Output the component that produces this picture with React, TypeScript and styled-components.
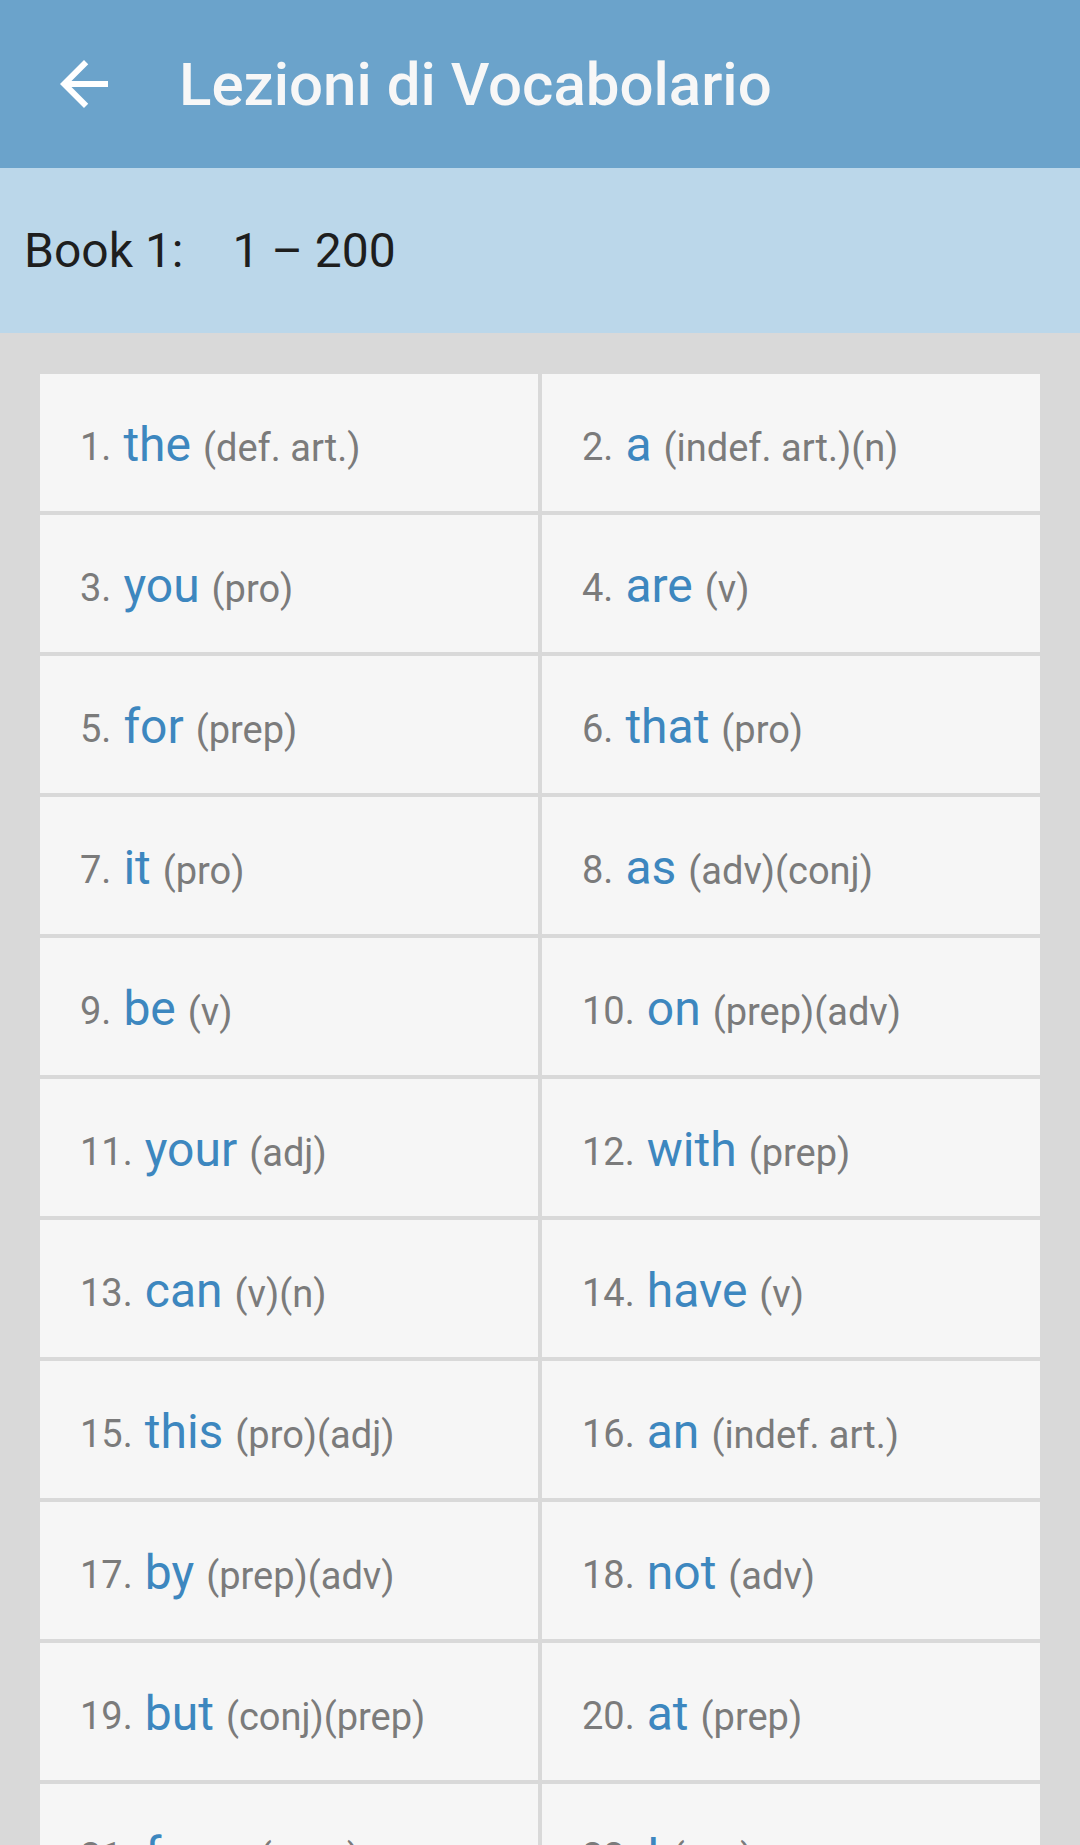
import React from "react";
import styled, { createGlobalStyle } from "styled-components";

const GlobalStyle = createGlobalStyle`
    html, body {
        margin: 0;
        padding: 0;
        background: #d9d9d9;
    }
    body {
        font-family: Roboto, "Noto Sans", "Liberation Sans", sans-serif;
        -webkit-font-smoothing: antialiased;
    }
`;

const Screen = styled.div`
    width: 1080px;
    min-height: 1845px;
    background: #d9d9d9;
`;

const AppBar = styled.header`
    display: flex;
    align-items: center;
    height: 168px;
    padding-left: 48px;
    background: #6ba3cb;
    box-sizing: border-box;
`;

const BackButton = styled.button`
    display: flex;
    align-items: center;
    justify-content: center;
    width: 72px;
    height: 72px;
    padding: 0;
    border: none;
    background: transparent;
    color: #ffffff;
    cursor: pointer;
`;

const Title = styled.h1`
    margin: 0 0 0 59px;
    font-size: 60px;
    font-weight: 500;
    color: #f7f7f7;
    letter-spacing: 0;
`;

const SubHeader = styled.div`
    display: flex;
    align-items: center;
    height: 165px;
    padding-left: 24px;
    background: #bbd7ea;
    font-size: 48px;
    color: #1e1e1e;
`;

const RangeLabel = styled.span`
    margin-left: 49px;
`;

const WordGrid = styled.div`
    display: grid;
    grid-template-columns: 1fr 1fr;
    gap: 4px;
    margin: 41px 40px 0;
`;

const Cell = styled.div`
    height: 137px;
    padding: 47px 0 0 40px;
    background: #f6f6f6;
    box-sizing: border-box;
    white-space: nowrap;
    line-height: 1;
`;

const Num = styled.span`
    font-size: 38px;
    color: #7b7b7b;
    margin-right: 12px;
    position: relative;
    top: -1px;
`;

const Word = styled.span`
    font-size: 48px;
    color: #3d87bf;
`;

const Pos = styled.span`
    font-size: 38px;
    color: #7b7b7b;
    margin-left: 12px;
`;

const ArrowBack = () => (
    <svg width="72" height="72" viewBox="0 0 24 24" fill="currentColor">
        <path d="M20 11H7.83l5.59-5.59L12 4l-8 8 8 8 1.41-1.41L7.83 13H20v-2z" />
    </svg>
);

const words: [string, string][] = [
    ["the", "(def. art.)"],
    ["a", "(indef. art.)(n)"],
    ["you", "(pro)"],
    ["are", "(v)"],
    ["for", "(prep)"],
    ["that", "(pro)"],
    ["it", "(pro)"],
    ["as", "(adv)(conj)"],
    ["be", "(v)"],
    ["on", "(prep)(adv)"],
    ["your", "(adj)"],
    ["with", "(prep)"],
    ["can", "(v)(n)"],
    ["have", "(v)"],
    ["this", "(pro)(adj)"],
    ["an", "(indef. art.)"],
    ["by", "(prep)(adv)"],
    ["not", "(adv)"],
    ["but", "(conj)(prep)"],
    ["at", "(prep)"],
    ["from", "(prep)"],
    ["I", "(pro)"],
];

const App = () => {
    return (
        <>
            <GlobalStyle />
            <Screen>
                <AppBar>
                    <BackButton aria-label="back">
                        <ArrowBack />
                    </BackButton>
                    <Title>Lezioni di Vocabolario</Title>
                </AppBar>
                <SubHeader>
                    <span>Book 1:</span>
                    <RangeLabel>1 – 200</RangeLabel>
                </SubHeader>
                <WordGrid>
                    {words.map(([word, pos], i) => (
                        <Cell key={i}>
                            <Num>{i + 1}.</Num>
                            <Word>{word}</Word>
                            <Pos>{pos}</Pos>
                        </Cell>
                    ))}
                </WordGrid>
            </Screen>
        </>
    );
};

export default App;
